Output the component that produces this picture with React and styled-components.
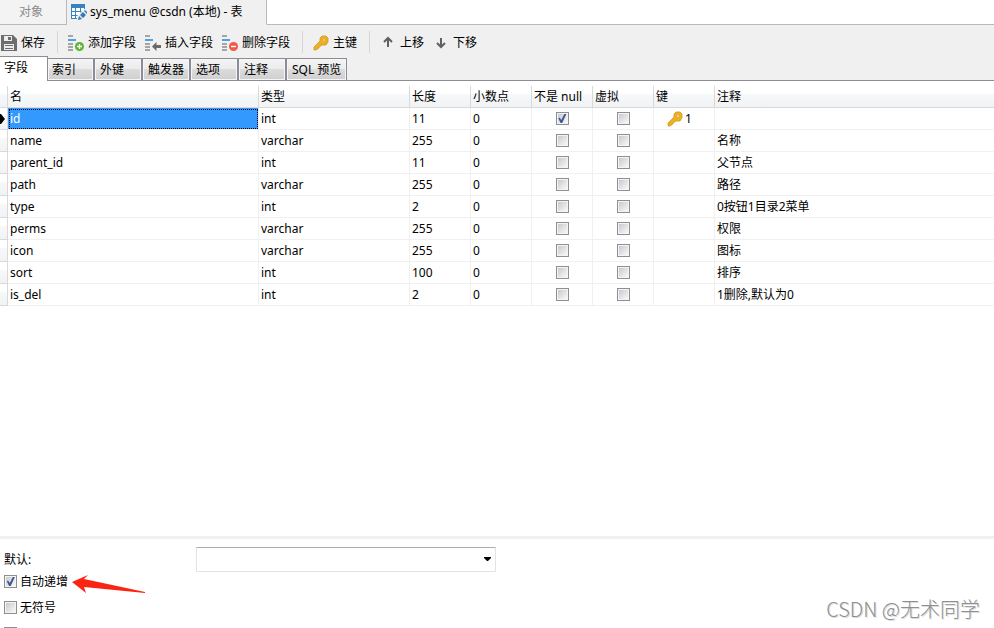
import React, { useState } from "react";
import styled, { createGlobalStyle } from "styled-components";

const GlobalStyle = createGlobalStyle`
  * {
    box-sizing: border-box;
  }

  body {
    margin: 0;
    background: #fff;
  }

  body, button, input, select {
    font-family: "Noto Sans", "Noto Sans CJK SC", sans-serif;
    font-size: 12px;
    line-height: 18px;
    color: #000;
  }

  button {
    margin: 0;
    padding: 0;
    border: 0;
    background: none;
    white-space: nowrap;
  }
`;

const Window = styled.main`
  position: relative;
  display: flex;
  flex-direction: column;
  height: 100vh;
  overflow: hidden;
`;

const DocumentTabs = styled.nav`
  display: flex;
  height: 25px;
  background: #f0f0f0;

  &::after {
    content: "";
    flex: 1;
    background: #fff;
    border-bottom: 1px solid #b9b9b9;
  }
`;

const DocumentTab = styled.button`
  display: flex;
  align-items: center;
  gap: 3px;
  padding: ${(props) => (props.$active ? "0 24px 0 4px" : "0 23px 0 19px")};
  color: ${(props) => (props.$active ? "#000" : "#8c8c8c")};
  background: ${(props) => (props.$active ? "#f0f0f0" : "#f3f3f3")};
  border-right: 1px solid #b9b9b9;
  border-bottom: 1px solid ${(props) => (props.$active ? "#f0f0f0" : "#b9b9b9")};
`;

const Toolbar = styled.div`
  display: flex;
  align-items: center;
  gap: 9px;
  height: 31px;
  padding: 4px 1px 0;
  background: #f0f0f0;
`;

const ToolButton = styled.button`
  display: flex;
  align-items: center;
  gap: 4px;
`;

const Separator = styled.span`
  width: 1px;
  height: 22px;
  margin: 0 1px 2px 3px;
  background: #d5d5d5;
`;

const SectionTabs = styled.nav`
  display: flex;
  align-items: flex-end;
  height: 25px;
  background: #f0f0f0;

  &::after {
    content: "";
    flex: 1;
    border-bottom: 1px solid #8c8b98;
  }
`;

const SectionTab = styled.button`
  width: ${(props) => props.$width}px;
  height: 23px;
  padding-left: 5px;
  text-align: left;
  border: 1px solid #8c8b98;
  background: linear-gradient(#f4f4f4, #ebebeb 50%, #dcdcdc 50%, #cfcfcf);
  box-shadow: inset 0 0 0 1px #f6f6f6;

  &[aria-selected="true"] {
    height: 25px;
    padding: 0 0 2px 4px;
    border-width: 1px 1px 0 0;
    background: #fff;
    box-shadow: none;
  }

  &[aria-selected="true"] + & {
    padding-left: 4px;
    border-left: 0;
  }
`;

const GridPane = styled.section`
  flex: 1;
  min-height: 0;
  padding-top: 5px;
  overflow: hidden;
`;

const FieldTable = styled.table`
  width: 100%;
  table-layout: fixed;
  border-collapse: separate;
  border-spacing: 0;

  th,
  td {
    height: 22px;
    padding: 0 0 0 2px;
    font-weight: normal;
    text-align: left;
    white-space: nowrap;
    border-right: 1px solid #f0f0f0;
    border-bottom: 1px solid #f0f0f0;
  }

  th {
    background: linear-gradient(#fff 40%, #f7f8fa 40%, #f1f2f4);
    border-color: #d8d9db;
  }

  th:last-child,
  td:last-child {
    border-right: 0;
  }
`;

const Col = styled.col`
  width: ${(props) => (props.$width ? `${props.$width}px` : "auto")};
`;

const Marker = styled.td`
  && {
    padding: 0;
    background: linear-gradient(#fff 40%, #f7f8fa 40%, #f1f2f4);
    border-color: #d8d9db;
  }

  svg {
    display: block;
  }
`;

const NameCell = styled.td`
  ${(props) =>
    props.$selected &&
    `
    && {
      color: #fff;
      background: #3399ff;
      outline: 1px dotted #000;
      outline-offset: -2px;
    }
  `}
`;

const CheckCell = styled.td`
  && {
    padding: 0;
    text-align: center;
  }
`;

const KeyMark = styled.span`
  display: flex;
  align-items: center;
  gap: 2px;
  padding-left: 11px;
`;

const CheckBox = styled.input.attrs({ type: "checkbox" })`
  appearance: none;
  display: block;
  flex: none;
  width: 13px;
  height: 13px;
  margin: 0;
  padding: 1px;
  border: 1px solid #8e8f8f;
  background: linear-gradient(135deg, #c6cad0, #f8f8f8) content-box, #f4f4f4;

  ${CheckCell} & {
    margin: 0 auto;
  }

  &:checked::after {
    content: "";
    display: block;
    width: 9px;
    height: 9px;
    background: #3f5793;
    clip-path: polygon(8% 45%, 26% 42%, 42% 66%, 76% 0, 98% 0, 52% 100%, 34% 100%);
  }
`;

const Properties = styled.section`
  flex: 0 0 92px;
  display: flex;
  flex-direction: column;
  gap: 7px;
  padding: 8px 4px 0;
  overflow: hidden;
  border-top: 3px solid #f0f0f0;
`;

const DefaultRow = styled.div`
  display: grid;
  grid-template-columns: 192px minmax(0, 300px);
  align-items: center;
  margin-bottom: -7px;
`;

const SelectBox = styled.div`
  display: grid;
  align-items: center;

  > * {
    grid-area: 1 / 1;
  }

  svg {
    justify-self: end;
    margin-right: 4px;
    pointer-events: none;
  }
`;

const Select = styled.select`
  appearance: none;
  width: 100%;
  height: 25px;
  padding: 0 20px 0 4px;
  border: 1px solid #e2e3ea;
  border-top-color: #abadb3;
  border-radius: 1px;
  background: #fff;
`;

const Option = styled.label`
  position: relative;
  display: flex;
  flex: none;
  align-items: center;
  align-self: flex-start;
  gap: 3px;
  height: 19px;
`;

const Pointer = styled.svg`
  position: absolute;
  top: 2px;
  left: 100%;
  margin-left: 3px;
`;

const Watermark = styled.span`
  position: absolute;
  right: 14px;
  bottom: 5px;
  font-family: "Noto Sans CJK SC", sans-serif;
  font-size: 20px;
  font-weight: 300;
  line-height: 28px;
  color: #8f8f8f;
  text-shadow: 1px 1px 0 #ddd;
`;

function TableIcon() {
  return (
    <svg width="16" height="16" viewBox="0 0 16 16">
      <path d="M0 0h14v15H0z" fill="#3683c4" />
      <path
        d="M1 4h3v3H1zM5 4h4v3H5zM10 4h3v3h-3zM1 8h3v3H1zM5 8h4v3H5zM10 8h3v3h-3zM1 12h3v2H1zM5 12h4v2H5z"
        fill="#fff"
      />
      <path d="M6 16v-4l7-7h1l2 2v9z" fill="#f0f0f0" />
      <path d="M7 16l1-4 3 3zM9 11l3-3 3 3-3 3zM13 7l1-1 2 2v2z" fill="#3579b5" />
    </svg>
  );
}

function SaveIcon() {
  return (
    <svg width="16" height="16" viewBox="0 0 16 16">
      <path d="M0 0h12l4 4v12H0z" fill="#6d6d6d" />
      <path d="M3 1h8v5H3zM3 9h10v6H3z" fill="#ededed" />
      <path d="M7 2h3v3H7zM4 10h8v1H4zM4 13h8v1H4z" fill="#6d6d6d" />
    </svg>
  );
}

function RowsIcon({ action }) {
  return (
    <svg width="16" height="16" viewBox="0 0 16 16">
      <path d="M0 0h5v2H0zM0 8h5v2H0zM0 11h5v2H0zM0 14h5v2H0z" fill="#a5a5a5" />
      <path d="M0 4h8v2H0z" fill="#4da3e5" />
      {action === "insert" ? (
        <path d="M7 11.500l4.500-4.500v3H16v3h-4.500v3z" fill="#696969" />
      ) : (
        <>
          <circle cx="11.500" cy="11.500" r="4.500" fill={action === "add" ? "#5bb531" : "#f3594b"} />
          <path
            d={action === "add" ? "M9 11.500h5M11.500 9v5" : "M9 11.500h5"}
            stroke="#fff"
            strokeWidth="1.400"
          />
        </>
      )}
    </svg>
  );
}

function KeyIcon() {
  return (
    <svg width="16" height="16" viewBox="0 0 16 16">
      <path
        fillRule="evenodd"
        d="M9 1h4l2 2v4l-2 3H9l-3 2v1H5v1H4l-1 1H1v-3l6-6V3zM11 3.500L9.500 5 11 6.500 12.500 5z"
        fill="#eeb01e"
        stroke="#d6972a"
        strokeWidth=".8"
      />
    </svg>
  );
}

function ArrowIcon({ down }) {
  return (
    <svg width="16" height="16" viewBox="0 0 16 16">
      <path
        d={down ? "M8 3v8M4 8l4 4 4-4" : "M8 12V4M4 7l4-4 4 4"}
        fill="none"
        stroke="#606060"
        strokeWidth="2"
      />
    </svg>
  );
}

const sections = [
  { label: "字段", width: 48 },
  { label: "索引", width: 46 },
  { label: "外键", width: 48 },
  { label: "触发器", width: 48 },
  { label: "选项", width: 48 },
  { label: "注释", width: 48 },
  { label: "SQL 预览", width: 61 },
];

const columns = [
  { label: "", width: 8 },
  { label: "名", width: 251 },
  { label: "类型", width: 151 },
  { label: "长度", width: 61 },
  { label: "小数点", width: 61 },
  { label: "不是 null", width: 61 },
  { label: "虚拟", width: 61 },
  { label: "键", width: 61 },
  { label: "注释" },
];

const fields = [
  { name: "id", type: "int", length: 11, notNull: true, key: 1, comment: "" },
  { name: "name", type: "varchar", length: 255, comment: "名称" },
  { name: "parent_id", type: "int", length: 11, comment: "父节点" },
  { name: "path", type: "varchar", length: 255, comment: "路径" },
  { name: "type", type: "int", length: 2, comment: "0按钮1目录2菜单" },
  { name: "perms", type: "varchar", length: 255, comment: "权限" },
  { name: "icon", type: "varchar", length: 255, comment: "图标" },
  { name: "sort", type: "int", length: 100, comment: "排序" },
  { name: "is_del", type: "int", length: 2, comment: "1删除,默认为0" },
];

export default function App() {
  const [section, setSection] = useState("字段");
  const [selected, setSelected] = useState("id");

  return (
    <>
      <GlobalStyle />
      <Window>
        <DocumentTabs>
          <DocumentTab>对象</DocumentTab>
          <DocumentTab $active>
            <TableIcon />
            sys_menu @csdn (本地) - 表
          </DocumentTab>
        </DocumentTabs>
        <Toolbar>
          <ToolButton>
            <SaveIcon />
            保存
          </ToolButton>
          <Separator />
          <ToolButton>
            <RowsIcon action="add" />
            添加字段
          </ToolButton>
          <ToolButton>
            <RowsIcon action="insert" />
            插入字段
          </ToolButton>
          <ToolButton>
            <RowsIcon action="delete" />
            删除字段
          </ToolButton>
          <Separator />
          <ToolButton>
            <KeyIcon />
            主键
          </ToolButton>
          <Separator />
          <ToolButton>
            <ArrowIcon />
            上移
          </ToolButton>
          <ToolButton>
            <ArrowIcon down />
            下移
          </ToolButton>
        </Toolbar>
        <SectionTabs role="tablist">
          {sections.map((item) => (
            <SectionTab
              key={item.label}
              role="tab"
              $width={item.width}
              aria-selected={section === item.label}
              onClick={() => setSection(item.label)}
            >
              {item.label}
            </SectionTab>
          ))}
        </SectionTabs>
        <GridPane>
          <FieldTable>
            <colgroup>
              {columns.map((column, index) => (
                <Col key={index} $width={column.width} />
              ))}
            </colgroup>
            <thead>
              <tr>
                {columns.map((column, index) => (
                  <th key={index}>{column.label}</th>
                ))}
              </tr>
            </thead>
            <tbody>
              {fields.map((field) => (
                <tr key={field.name} onClick={() => setSelected(field.name)}>
                  <Marker>
                    {selected === field.name && (
                      <svg width="6" height="10" viewBox="0 0 6 10">
                        <path d="M0 0h1l4 5-4 5H0z" />
                      </svg>
                    )}
                  </Marker>
                  <NameCell $selected={selected === field.name}>{field.name}</NameCell>
                  <td>{field.type}</td>
                  <td>{field.length}</td>
                  <td>0</td>
                  <CheckCell>
                    <CheckBox
                      aria-label={`${field.name} 不是 null`}
                      defaultChecked={field.notNull}
                    />
                  </CheckCell>
                  <CheckCell>
                    <CheckBox aria-label={`${field.name} 虚拟`} />
                  </CheckCell>
                  <td>
                    {field.key && (
                      <KeyMark>
                        <KeyIcon />
                        {field.key}
                      </KeyMark>
                    )}
                  </td>
                  <td>{field.comment}</td>
                </tr>
              ))}
            </tbody>
          </FieldTable>
        </GridPane>
        <Properties>
          <DefaultRow>
            <label htmlFor="default-value">默认:</label>
            <SelectBox>
              <Select id="default-value" />
              <svg width="9" height="5" viewBox="0 0 9 5">
                <path d="M1 0h7v1L5 4H4L1 1z" />
              </svg>
            </SelectBox>
          </DefaultRow>
          <Option>
            <CheckBox defaultChecked />
            自动递增
            <Pointer width="76" height="20" viewBox="0 0 76 20">
              <path d="M1 8L17 1l-4 4 61 13v1l-61-6 2 6z" fill="#fb2412" />
            </Pointer>
          </Option>
          <Option>
            <CheckBox />
            无符号
          </Option>
          <Option>
            <CheckBox aria-label="填充零" />
          </Option>
        </Properties>
        <Watermark>CSDN @无术同学</Watermark>
      </Window>
    </>
  );
}
